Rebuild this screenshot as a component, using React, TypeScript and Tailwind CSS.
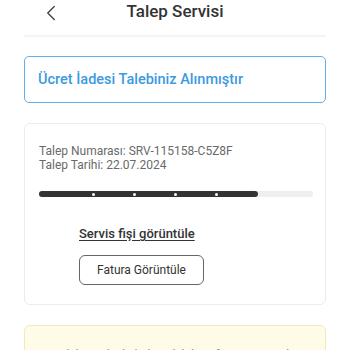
import { ChevronLeft } from "lucide-react";

const DOTS = [19.3, 34.3, 49.3, 64.2];

export default function App() {
  return (
    <div
      className="w-[350px] h-[350px] overflow-hidden bg-white"
      style={{ fontFamily: "Roboto, 'Noto Sans', sans-serif" }}
    >
      {/* header */}
      <div className="mx-[24px] h-[37px] border-b-2 border-[#f4f4f4] relative flex items-center justify-center">
        <ChevronLeft
          className="absolute left-[14px] top-0 w-[26px] h-[26px] text-[#444]"
          strokeWidth={1.3}
        />
        <span className="text-[17px] leading-none font-medium text-[#333] -mt-[12px]">
          Talep Servisi
        </span>
      </div>

      <div className="px-[24px] pt-[19px] flex flex-col gap-[20px]">
        {/* status box */}
        <div className="h-[47px] rounded-[5px] border border-[#62aee8] flex items-center px-[13px]">
          <span className="text-[14.5px] font-medium text-[#3c9ae0]">
            Ücret İadesi Talebiniz Alınmıştır
          </span>
        </div>

        {/* detail card */}
        <div className="h-[182px] shrink-0 rounded-[6px] border border-[#ececec] px-[14px] pt-[20px] flex flex-col">
          <div className="text-[12px] leading-[14px] text-[#6a6a6a]">
            <div>Talep Numarası: SRV-115158-C5Z8F</div>
            <div>Talep Tarihi: 22.07.2024</div>
          </div>

          <div className="mt-[19px] w-[274px] h-[6px] rounded-full bg-[#efefef] relative">
            <div className="h-full w-[80%] rounded-full bg-[#333]" />
            {DOTS.map((d) => (
              <span
                key={d}
                className="absolute top-[1.5px] w-[3px] h-[3px] rounded-full bg-white"
                style={{ left: `${d}%` }}
              />
            ))}
          </div>

          <div className="pl-[40px] mt-[27px] flex flex-col items-start">
            <span className="text-[13px] font-medium text-[#333] underline underline-offset-2">
              Servis fişi görüntüle
            </span>
            <button className="mt-[11px] w-[125px] h-[30px] rounded-[6px] border-[1.5px] border-[#666] text-[12px] text-[#333]">
              Fatura Görüntüle
            </button>
          </div>
        </div>

        {/* info box */}
        <div className="h-[80px] shrink-0 rounded-[6px] border border-[#f1e8bd] bg-[#fffbe9] px-[14px] pt-[21px]">
          <p className="text-[12px] leading-[16px] text-[#888]">
            Bu talebiniz ile ilgili detaylı bilgiyi fatura üzerinde görebilirsiniz.
          </p>
        </div>
      </div>
    </div>
  );
}
